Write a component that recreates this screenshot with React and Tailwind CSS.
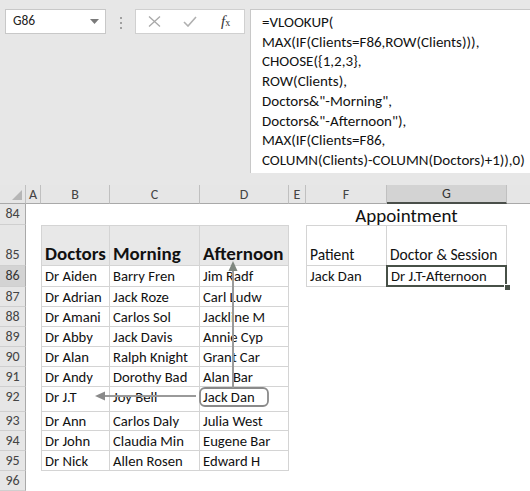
import React from "react";

const FONT = "font-['Carlito','Calibri','Lato',sans-serif]";

const data = [
  [86, "Dr Aiden", "Barry Fren", "Jim Radf"],
  [87, "Dr Adrian", "Jack Roze", "Carl Ludw"],
  [88, "Dr Amani", "Carlos Sol", "Jackline M"],
  [89, "Dr Abby", "Jack Davis", "Annie Cyp"],
  [90, "Dr Alan", "Ralph Knight", "Grant Car"],
  [91, "Dr Andy", "Dorothy Bad", "Alan Bar"],
  [92, "Dr J.T", "Joy Bell", "Jack Dan"],
  [93, "Dr Ann", "Carlos Daly", "Julia West"],
  [94, "Dr John", "Claudia Min", "Eugene Bar"],
  [95, "Dr Nick", "Allen Rosen", "Edward H"],
];

function RowHead({ n, sel, align = "center" }) {
  return (
    <div
      className={
        "border-r border-b border-r-[#a9a9a9] border-b-[#cfcfcf] flex justify-center text-[14px] leading-[18px] " +
        (align === "end" ? "items-end pb-[1px] " : align === "start" ? "items-start pt-[1px] " : "items-center ") +
        (sel ? "bg-[#d3d3d3] text-[#333]" : "bg-[#e6e6e6] text-[#444]")
      }
    >
      {n}
    </div>
  );
}

function Empty() {
  return <div className="bg-white" />;
}

function Cell({ children, cls = "", align = "center" }) {
  return (
    <div
      className={
        "bg-white overflow-hidden whitespace-nowrap flex pl-[3px] text-[14.67px] leading-[18px] text-[#111] " +
        (align === "end" ? "items-end pb-[1px] " : align === "start" ? "items-start pt-[1px] " : "items-center ") +
        cls
      }
    >
      {children}
    </div>
  );
}

export default function App() {
  return (
    <div className={"relative w-[530px] h-[491px] overflow-hidden bg-[#e7e7e7] " + FONT}>
      {/* Top: name box + formula bar */}
      <div className="h-[185px] flex">
        <div className="w-[250px] shrink-0 flex items-start pt-[9px] pl-[5px]">
          <div className="w-[101px] h-[25px] bg-white border border-[#c8c8c8] flex items-center justify-between pl-[7px] pr-[6px] text-[13.5px] text-[#222]">
            <span>G86</span>
            <svg width="9" height="5" viewBox="0 0 9 5">
              <polygon points="0,0 9,0 4.5,5" fill="#7a7a7a" />
            </svg>
          </div>
          <div className="ml-[14px] mt-[8px] flex flex-col gap-[3px]">
            <div className="w-[2px] h-[2px] bg-[#a0a0a0]" />
            <div className="w-[2px] h-[2px] bg-[#a0a0a0]" />
            <div className="w-[2px] h-[2px] bg-[#a0a0a0]" />
          </div>
          <div className="ml-[13px] w-[110px] h-[25px] bg-white border border-[#d0d0d0] flex items-center">
            <svg className="ml-[12px]" width="13" height="11" viewBox="0 0 13 11">
              <path d="M1 0.5 L12 10.5 M12 0.5 L1 10.5" stroke="#a8a8a8" strokeWidth="1.3" fill="none" />
            </svg>
            <svg className="ml-[22px]" width="14" height="11" viewBox="0 0 14 11">
              <path d="M1 6 L5 10 L13 1" stroke="#b0b0b0" strokeWidth="1.6" fill="none" />
            </svg>
            <span className="ml-[24px] font-['Liberation_Serif',serif] italic text-[15px] text-[#333] leading-none">
              f<span className="text-[10px] not-italic font-['Liberation_Serif',serif]">x</span>
            </span>
          </div>
        </div>
        <div className="mt-[9px] h-[164px] flex-1 bg-white border-l border-t border-[#c8c8c8] pl-[11px] pt-[3px] text-[15px] leading-[19.7px] text-[#111] whitespace-nowrap">
          <div>=VLOOKUP(</div>
          <div>MAX(IF(Clients=F86,ROW(Clients))),</div>
          <div>CHOOSE({"{1,2,3}"},</div>
          <div>ROW(Clients),</div>
          <div>Doctors&amp;"-Morning",</div>
          <div>Doctors&amp;"-Afternoon"),</div>
          <div>MAX(IF(Clients=F86,</div>
          <div>COLUMN(Clients)-COLUMN(Doctors)+1)),0)</div>
        </div>
      </div>

      {/* Sheet grid */}
      <div className="grid grid-cols-[26px_15px_69px_90px_89px_17px_81px_120px_1fr] grid-rows-[19px_21px_41px_21px_20px_20px_20px_20px_20px_25px_19px_20px_20px_20px]">
        {/* Column headers */}
        <div className="bg-[#e6e6e6] border-r border-b border-r-[#c0c0c0] border-b-[#a9a9a9] flex items-end justify-end pr-[3px] pb-[3px]">
          <svg width="10" height="10" viewBox="0 0 10 10">
            <polygon points="10,0 10,10 0,10" fill="#b6b6b6" />
          </svg>
        </div>
        {["A", "B", "C", "D", "E", "F"].map((c) => (
          <div
            key={c}
            className="bg-[#e6e6e6] border-r border-b border-r-[#c0c0c0] border-b-[#a9a9a9] flex items-center justify-center text-[14px] text-[#444]"
          >
            {c}
          </div>
        ))}
        <div className="bg-[#d3d3d3] border-r border-b-2 border-r-[#c0c0c0] border-b-[#4a4f4a] flex items-center justify-center text-[14px] text-[#333]">
          G
        </div>
        <div className="bg-[#e6e6e6] border-b border-b-[#a9a9a9]" />

        {/* Row 84 */}
        <RowHead n={84} />
        <Empty />
        <Empty />
        <Empty />
        <Empty />
        <Empty />
        <div className="col-span-2 bg-white flex items-center justify-center text-[19px] leading-[21px] text-[#111] pt-[1px]">
          Appointment
        </div>
        <Empty />

        {/* Row 85 */}
        <RowHead n={85} align="end" />
        <Empty />
        <Cell align="end" cls="!bg-[#e8e8e8] border-l border-t border-r border-b border-[#d4d4d4] font-bold !text-[19px] !leading-[22px] !pb-0">
          Doctors
        </Cell>
        <Cell align="end" cls="!bg-[#e8e8e8] border-t border-r border-b border-[#d4d4d4] font-bold !text-[19px] !leading-[22px] !pb-0">
          Morning
        </Cell>
        <Cell align="end" cls="!bg-[#e8e8e8] border-t border-r border-b border-[#d4d4d4] font-bold !text-[19px] !leading-[22px] !pb-0">
          Afternoon
        </Cell>
        <Empty />
        <Cell align="end" cls="border-l border-t border-r border-b border-[#d4d4d4] !text-[15.5px] !leading-[20px] !pb-0">
          Patient
        </Cell>
        <Cell align="end" cls="border-t border-r border-b border-[#d4d4d4] !text-[15.5px] !leading-[20px] !pb-0">
          Doctor &amp; Session
        </Cell>
        <Empty />

        {/* Rows 86-95 */}
        {data.map(([n, b, c, d]) => (
          <React.Fragment key={n}>
            <RowHead n={n} sel={n === 86} align={n === 92 ? "start" : "center"} />
            <Empty />
            <Cell align={n === 92 ? "start" : "center"} cls="border-l border-r border-b border-[#d4d4d4]">
              {b}
            </Cell>
            <Cell align={n === 92 ? "start" : "center"} cls="border-r border-b border-[#d4d4d4]">
              {c}
            </Cell>
            <Cell align={n === 92 ? "start" : "center"} cls="border-r border-b border-[#d4d4d4]">
              {d}
            </Cell>
            <Empty />
            {n === 86 ? (
              <>
                <Cell cls="border-l border-r border-b border-[#d4d4d4]">Jack Dan</Cell>
                <div className="relative">
                  <div className="absolute -left-[1px] -top-[1px] w-[121px] h-[22px] border-2 border-[#475047] bg-white flex items-center pl-[3px] text-[14.67px] leading-[18px] text-[#111] whitespace-nowrap">
                    Dr J.T-Afternoon
                  </div>
                  <div className="absolute right-[-4px] bottom-[-4px] w-[5px] h-[5px] bg-[#475047] border border-white box-content" />
                </div>
              </>
            ) : (
              <>
                <Empty />
                <Empty />
              </>
            )}
            <Empty />
          </React.Fragment>
        ))}

        {/* Row 96 */}
        <RowHead n={96} />
        <Empty />
        <Empty />
        <Empty />
        <Empty />
        <Empty />
        <Empty />
        <Empty />
        <Empty />
      </div>

      {/* Arrow annotations overlay */}
      <svg className="absolute left-0 top-0 pointer-events-none" width="530" height="491" viewBox="0 0 530 491">
        <rect x="200" y="388" width="68" height="18" rx="5" ry="5" fill="none" stroke="#8a8a8a" strokeWidth="1.8" />
        <line x1="196" y1="396" x2="104" y2="396" stroke="#9a9a9a" strokeWidth="2" />
        <polygon points="95,396 105,391.5 105,400.5" fill="#8a8a8a" />
        <line x1="233" y1="388" x2="233" y2="270" stroke="#9a9a9a" strokeWidth="2" />
        <polygon points="233,261 228.5,271 237.5,271" fill="#7f877f" />
      </svg>
    </div>
  );
}
